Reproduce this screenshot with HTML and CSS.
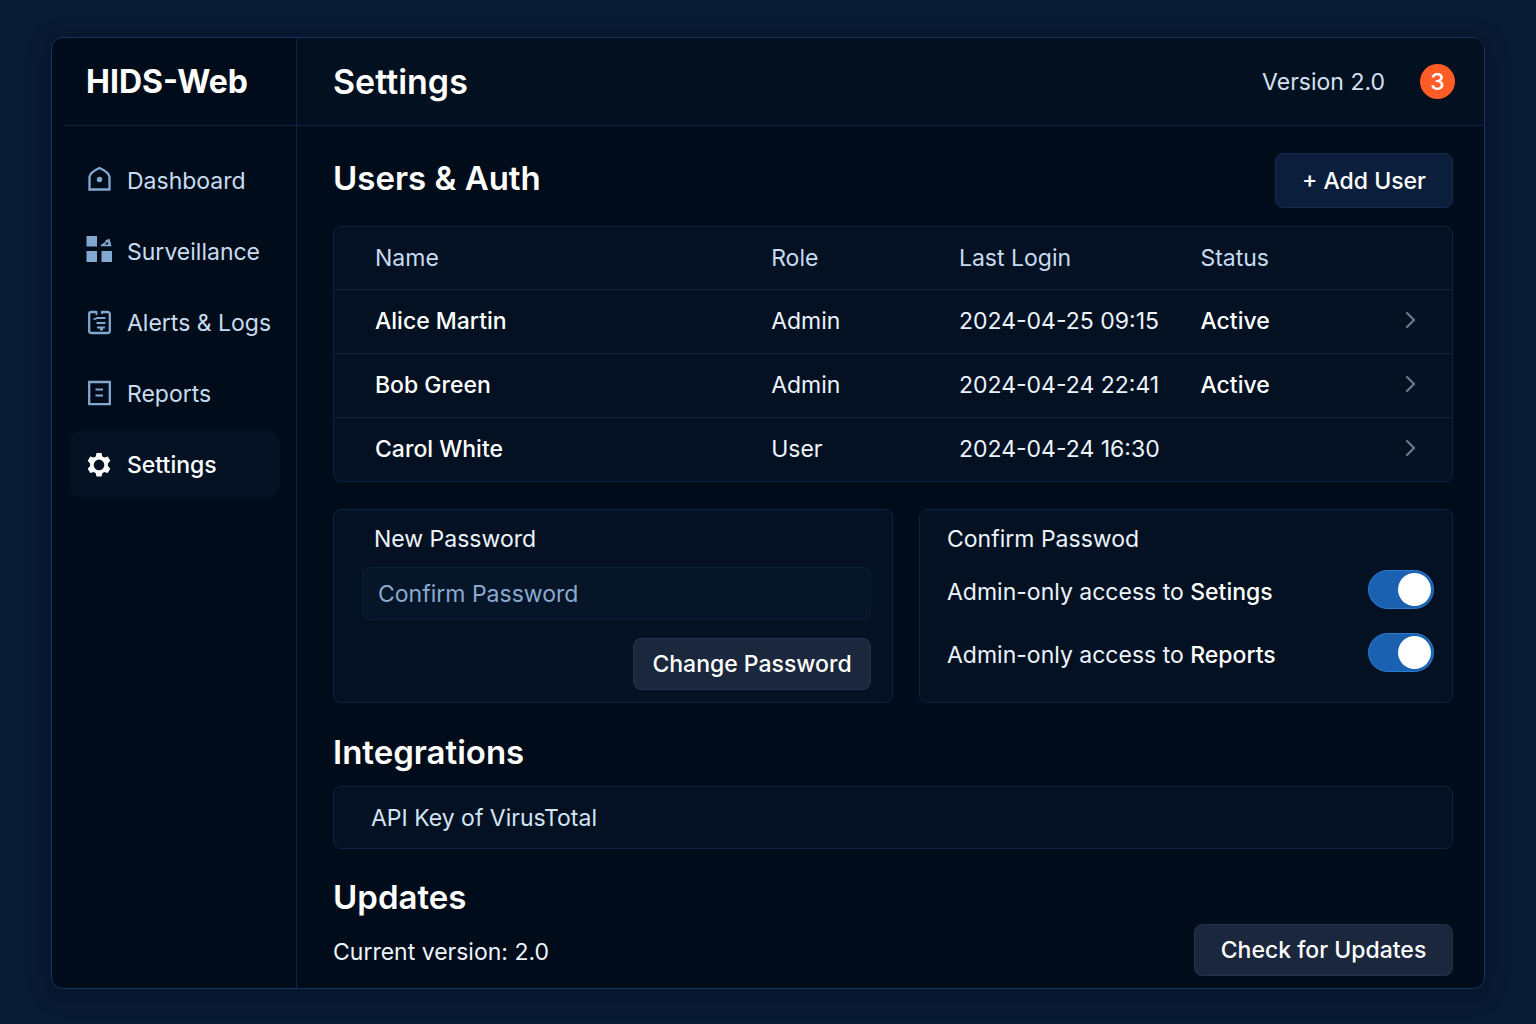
FILE: index.html
```html
<!DOCTYPE html>
<html lang="en">
<head>
<meta charset="utf-8">
<meta name="viewport" content="width=device-width, initial-scale=1">
<title>HIDS-Web – Settings</title>
<link rel="stylesheet" href="styles.css">
</head>
<body>
<div class="app">
  <aside class="sidebar">
    <div class="brand">HIDS-Web</div>
    <nav class="nav" aria-label="Main">
      <a class="nav-item" href="#dashboard">
        <svg class="nav-icon" viewBox="0 3 26 26" aria-hidden="true"><path d="M3.500 24.500V12C4 7.500 9 5 13.500 3C18 5 23 7.500 23.500 12V24.500Z" fill="none" stroke="currentColor" stroke-width="2.300"/><circle cx="13.500" cy="14.500" r="2.700" fill="currentColor"/></svg>
        <span>Dashboard</span>
      </a>
      <a class="nav-item" href="#surveillance">
        <svg class="nav-icon" viewBox="0 3 26 26" aria-hidden="true"><g fill="currentColor"><path d="M.5 0h10.500v10.500H.5zM.5 15h10.500v11H.5zM15.500 15H26v11H15.500z"/><path fill-rule="evenodd" d="M14.800 10.300V9L19.500 5.800V4.200L23.500 2.800L25.600 10.300ZM18.500 8.600H22.300L21.800 5.800Z"/></g></svg>
        <span>Surveillance</span>
      </a>
      <a class="nav-item" href="#alerts">
        <svg class="nav-icon" viewBox="0 1 26 26" aria-hidden="true"><g fill="none" stroke="currentColor"><path d="M10 3H5.500Q3.200 3 3.200 5V22Q3.200 24 5.500 24H21.500Q23.800 24 23.800 22V5Q23.800 3 21.500 3H15.500" stroke-width="2.300"/><path d="M10.500 2v4M16 2v3M7.500 10.500l4-1.500h8M10.500 14h9M11 18.500h8M14 20.500h3" stroke-width="1.800"/></g></svg>
        <span>Alerts &amp; Logs</span>
      </a>
      <a class="nav-item" href="#reports">
        <svg class="nav-icon" viewBox="0 1 26 26" aria-hidden="true"><path d="M3.200 2H23.800V24.200H3.200Z" fill="none" stroke="currentColor" stroke-width="2.300"/><path d="M9.500 9.500h7.500M9.500 15.500h7.500" fill="none" stroke="currentColor" stroke-width="2"/></svg>
        <span>Reports</span>
      </a>
      <a class="nav-item nav-item-active" href="#settings" aria-current="page">
        <svg class="nav-icon" viewBox="0 0 26 26" aria-hidden="true"><path fill="currentColor" fill-rule="evenodd" d="M10.500 1h5l.8 3.400 2 1.100 3.400-1 2.600 4.300-2.400 2.700v2.600l2.400 2.700-2.600 4.300-3.400-1-2 1.100-.8 3.400h-5l-.8-3.400-2-1.100-3.400 1-2.600-4.300 2.400-2.700v-2.600L1.700 8.800l2.600-4.300 3.400 1 2-1.100ZM13 7.600a5.300 5.300 0 1 0 0 10.600a5.300 5.300 0 1 0 0-10.600Z"/></svg>
        <span>Settings</span>
      </a>
    </nav>
  </aside>

  <div class="content">
    <header class="topbar">
      <h1 class="page-title">Settings</h1>
      <div class="topbar-info">
        <span class="version">Version 2.0</span>
        <span class="badge">3</span>
      </div>
    </header>

    <main class="main">
      <section class="users">
        <div class="section-head">
          <h2 class="section-title">Users &amp; Auth</h2>
          <button class="button button-primary" type="button">+ Add User</button>
        </div>
        <div class="table-card">
          <table class="table">
            <colgroup><col class="col-name"><col class="col-role"><col class="col-login"><col class="col-status"><col></colgroup>
            <thead>
              <tr><th scope="col">Name</th><th scope="col">Role</th><th scope="col">Last Login</th><th scope="col">Status</th><td></td></tr>
            </thead>
            <tbody>
              <tr><td class="strong">Alice Martin</td><td>Admin</td><td>2024-04-25 09:15</td><td class="strong">Active</td><td class="more"><svg class="chevron" viewBox="0 0 12 18" aria-hidden="true"><path d="M2 2l7 7-7 7"/></svg></td></tr>
              <tr><td class="strong">Bob Green</td><td>Admin</td><td>2024-04-24 22:41</td><td class="strong">Active</td><td class="more"><svg class="chevron" viewBox="0 0 12 18" aria-hidden="true"><path d="M2 2l7 7-7 7"/></svg></td></tr>
              <tr><td class="strong">Carol White</td><td>User</td><td>2024-04-24 16:30</td><td></td><td class="more"><svg class="chevron" viewBox="0 0 12 18" aria-hidden="true"><path d="M2 2l7 7-7 7"/></svg></td></tr>
            </tbody>
          </table>
        </div>
      </section>

      <div class="cards">
        <form class="card password-card">
          <label class="field-label" for="new-password">New Password</label>
          <input class="field" id="new-password" type="password" placeholder="Confirm Password">
          <button class="button button-neutral" type="button">Change Password</button>
        </form>
        <section class="card access-card">
          <h3 class="card-title">Confirm Passwod</h3>
          <div class="access-list">
            <div class="access-row">
              <label for="access-settings">Admin-only access to <b>Setings</b></label>
              <input class="switch" id="access-settings" type="checkbox" role="switch" checked>
            </div>
            <div class="access-row">
              <label for="access-reports">Admin-only access to <b>Reports</b></label>
              <input class="switch" id="access-reports" type="checkbox" role="switch" checked>
            </div>
          </div>
        </section>
      </div>

      <section class="integrations">
        <h2 class="section-title">Integrations</h2>
        <input class="api-key" type="text" aria-label="API Key of VirusTotal" placeholder="API Key of VirusTotal">
      </section>

      <section class="updates">
        <div class="updates-text">
          <h2 class="section-title">Updates</h2>
          <p class="current">Current version: 2.0</p>
        </div>
        <button class="button button-neutral button-wide" type="button">Check for Updates</button>
      </section>
    </main>
  </div>
</div>
</body>
</html>
```
FILE: styles.css
```css
:root {
  --line: #0b2345;
  --surface: #041122;
  --text: #ecf4fd;
  --muted: #c8dcf1;
}

* {
  box-sizing: border-box;
}

body {
  margin: 0;
  min-height: 100vh;
  display: flex;
  padding: 37px 51px 35px;
  background: #091a33;
  color: var(--text);
  font: 400 23px/32px Inter, "Liberation Sans", sans-serif;
}

h1, h2, h3, p {
  margin: 0;
}

input, button {
  font: inherit;
}

.app {
  flex: 1;
  display: grid;
  grid-template-columns: 245px minmax(0, 1fr);
  border: 1px solid #14335f;
  border-radius: 12px;
  background: #010c1a;
  box-shadow: 0 4px 24px rgba(0, 6, 18, 0.3);
  overflow: hidden;
}

.sidebar {
  border-right: 1px solid var(--line);
}

.brand {
  height: 88px;
  display: flex;
  align-items: center;
  margin-left: 12px;
  padding-left: 22px;
  border-bottom: 1px solid var(--line);
  color: #fff;
  font-size: 32px;
  font-weight: 700;
}

.nav {
  display: flex;
  flex-direction: column;
  gap: 5px;
  padding: 21px 16px 0 18px;
}

.nav-item {
  display: flex;
  align-items: center;
  gap: 15px;
  height: 66px;
  padding: 2px 0 0 16px;
  border-radius: 10px;
  color: var(--muted);
  text-decoration: none;
  white-space: nowrap;
}

.nav-icon {
  flex: none;
  width: 26px;
  height: 26px;
  overflow: visible;
  color: #82a8d2;
}

.nav-item-active,
.nav-item-active .nav-icon {
  color: #fff;
}

.nav-item-active {
  background: #041224;
  font-weight: 500;
}

.topbar {
  height: 88px;
  display: flex;
  align-items: center;
  justify-content: space-between;
  padding: 0 29px 0 36px;
  border-bottom: 1px solid var(--line);
  background: #031020;
}

.page-title,
.section-title {
  color: #fff;
  font-size: 33px;
  line-height: 44px;
  font-weight: 600;
}

.page-title {
  font-size: 34px;
}

.topbar-info {
  display: flex;
  align-items: center;
  gap: 35px;
}

.version {
  color: #d3e1f2;
}

.badge {
  width: 35px;
  height: 35px;
  display: grid;
  place-items: center;
  border-radius: 50%;
  background: #ff5c26;
  color: #fff;
  font-weight: 500;
}

.main {
  padding: 27px 31px 12px 36px;
}

.section-head {
  display: flex;
  justify-content: space-between;
  align-items: flex-start;
  margin-bottom: 18px;
}

.section-head .section-title {
  padding-top: 3px;
}

.button {
  border: 1px solid #233149;
  border-radius: 8px;
  color: #fff;
  font-weight: 500;
  white-space: nowrap;
}

.button-primary {
  width: 178px;
  height: 55px;
  border-color: #142d50;
  background: #0b1f3d;
}

.button-neutral {
  width: 238px;
  height: 52px;
  background: #1a273d;
}

.button-wide {
  width: 259px;
}

.table-card,
.card {
  border: 1px solid var(--line);
  border-radius: 8px;
  background: var(--surface);
}

.table {
  width: 100%;
  table-layout: fixed;
  border-collapse: collapse;
}

.col-name {
  width: 39.1%;
}

.col-role {
  width: 16.8%;
}

.col-login {
  width: 21.6%;
}

.col-status {
  width: 14%;
}

.table th,
.table td {
  height: 64px;
  padding: 0;
  text-align: left;
  white-space: nowrap;
}

.table thead th,
.table thead td {
  height: 62px;
}

.table th {
  color: var(--muted);
  font-weight: 400;
}

.table th:first-child,
.table td:first-child {
  padding-left: 41px;
}

.table tbody tr {
  border-top: 1px solid var(--line);
}

.table .strong {
  color: #fff;
  font-weight: 500;
}

.table .more {
  padding-right: 35px;
  text-align: right;
}

.chevron {
  width: 12px;
  height: 18px;
  fill: none;
  stroke: #66748d;
  stroke-width: 2.4;
  stroke-linecap: round;
  stroke-linejoin: round;
}

.cards {
  display: grid;
  grid-template-columns: 560fr 534fr;
  gap: 26px;
  margin: 27px 0;
}

.card {
  min-height: 193px;
}

.password-card {
  display: flex;
  flex-direction: column;
  padding: 13px 21px 12px 28px;
}

.field-label {
  padding-left: 12px;
}

.field {
  height: 53px;
  margin: 12px 0 18px;
  padding: 0 15px;
  border: 1px solid #0a2039;
  border-radius: 8px;
  background: #061528;
  color: #fff;
}

.field::placeholder {
  color: #8aaad0;
  opacity: 1;
}

.password-card .button {
  align-self: flex-end;
}

.access-card {
  padding: 13px 18px 12px 27px;
}

.card-title {
  font-size: 23px;
  font-weight: 400;
}

.access-list {
  display: grid;
  gap: 24px;
  margin-top: 15px;
}

.access-row {
  display: flex;
  align-items: center;
  justify-content: space-between;
}

.access-row label {
  padding-top: 4px;
}

.access-row b {
  font-weight: 500;
  color: #fff;
}

.switch {
  appearance: none;
  flex: none;
  width: 66px;
  height: 39px;
  margin: 0;
  padding: 2px;
  border: 1px solid #2a7bd2;
  border-radius: 20px;
  background: #1a62b1;
}

.switch::before {
  content: "";
  display: block;
  width: 33px;
  height: 33px;
  border-radius: 50%;
  background: #fff;
}

.switch:checked::before {
  margin-left: auto;
}

.api-key {
  display: block;
  width: 100%;
  height: 63px;
  margin-top: 12px;
  padding: 0 37px;
  border: 1px solid var(--line);
  border-radius: 8px;
  background: var(--surface);
  color: #fff;
}

.api-key::placeholder {
  color: #d3e4f5;
  opacity: 1;
}

.updates {
  display: flex;
  align-items: flex-end;
  justify-content: space-between;
  margin-top: 26px;
}

.current {
  margin: 17px 0 8px;
}
```
